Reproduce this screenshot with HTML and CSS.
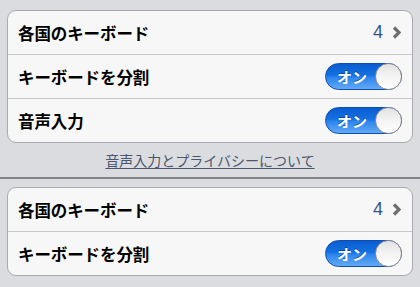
FILE: index.html
```html
<!DOCTYPE html>
<html lang="ja">
<head>
<meta charset="utf-8">
<link rel="stylesheet" href="styles.css">
</head>
<body>
<div class="page">
  <div class="group">
    <div class="row">
      <span class="label">各国のキーボード</span>
      <span class="detail">4<svg class="chev" width="9" height="13" viewBox="0 0 9 13"><path d="M2 1.5 L7 6.5 L2 11.5" fill="none" stroke="#6e6e6e" stroke-width="3.2"/></svg></span>
    </div>
    <div class="row">
      <span class="label">キーボードを分割</span>
      <span class="switch"><span class="on">オン</span><span class="knob"></span></span>
    </div>
    <div class="row">
      <span class="label">音声入力</span>
      <span class="switch"><span class="on">オン</span><span class="knob"></span></span>
    </div>
  </div>
  <div class="footer"><span class="link">音声入力とプライバシーについて</span></div>
  <div class="sep"></div>
  <div class="group">
    <div class="row">
      <span class="label">各国のキーボード</span>
      <span class="detail">4<svg class="chev" width="9" height="13" viewBox="0 0 9 13"><path d="M2 1.5 L7 6.5 L2 11.5" fill="none" stroke="#6e6e6e" stroke-width="3.2"/></svg></span>
    </div>
    <div class="row">
      <span class="label">キーボードを分割</span>
      <span class="switch"><span class="on">オン</span><span class="knob"></span></span>
    </div>
  </div>
</div>
</body>
</html>
```
FILE: styles.css
```css
html, body {
  margin: 0;
  padding: 0;
  background: #dadce0;
  font-family: "Noto Sans CJK JP", "Noto Sans", sans-serif;
}
.page {
  width: 420px;
  height: 287px;
  overflow: hidden;
  padding-top: 10px;
  box-sizing: border-box;
}
.group {
  margin: 0 7px;
  background: #f7f7f7;
  border: 1px solid #a9abb0;
  border-radius: 9px;
  overflow: hidden;
}
.row {
  height: 43px;
  display: flex;
  align-items: center;
  justify-content: space-between;
  padding: 0 10px 0 10px;
  border-top: 1px solid #c9c9cb;
}
.row:first-child {
  border-top: none;
}
.label {
  font-size: 16.5px;
  font-weight: 700;
  color: #000;
  letter-spacing: -0.1px;
}
.detail {
  display: flex;
  align-items: center;
  gap: 9px;
  font-family: "Liberation Sans", sans-serif;
  font-size: 18px;
  color: #385487;
}
.chev {
  display: block;
  margin-right: 1px;
}
.switch {
  position: relative;
  width: 77px;
  height: 27px;
  box-sizing: border-box;
  border-radius: 14px;
  border: 1px solid #0d4fb0;
  background: linear-gradient(to bottom, #0a5ccf 0%, #1471e2 45%, #2e86ee 55%, #62a9f5 100%);
  display: flex;
  align-items: center;
}
.on {
  color: #fff;
  font-size: 15px;
  font-weight: 700;
  padding-left: 11px;
  text-shadow: 0 -1px 0 rgba(0, 40, 120, 0.6);
}
.knob {
  position: absolute;
  right: -1px;
  top: -1px;
  width: 27px;
  height: 27px;
  box-sizing: border-box;
  border-radius: 50%;
  border: 1px solid #8c8c8c;
  background: linear-gradient(to bottom, #e2e2e2 0%, #f4f4f4 50%, #ffffff 100%);
}
.footer {
  height: 34px;
  display: flex;
  align-items: center;
  justify-content: center;
}
.link {
  font-size: 14px;
  color: #4c566c;
  text-decoration: underline;
  text-underline-offset: 2px;
}
.sep {
  height: 2px;
  background: #858585;
  margin-bottom: 8px;
}
```
